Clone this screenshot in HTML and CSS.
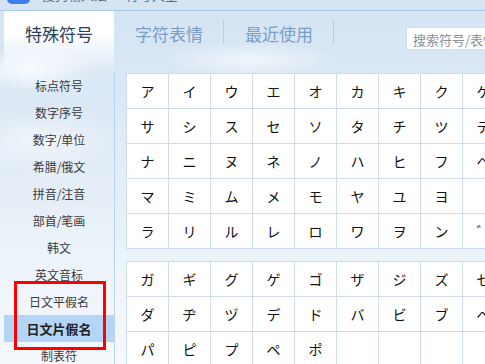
FILE: index.html
```html
<!DOCTYPE html>
<html lang="zh-CN">
<head>
  <meta charset="UTF-8">
  <title>符号大全</title>
  <link rel="stylesheet" href="styles.css">
</head>
<body>
  <div class="app">
    <div class="title-bar">
      <span class="logo"></span>
      <span class="title-text">搜狗输入法 · 符号大全</span>
    </div>

    <div class="tab-row">
      <div class="tab active">特殊符号</div>
      <div class="tab">字符表情</div>
      <div class="tab">最近使用</div>
      <div class="search-box">搜索符号/表情</div>
    </div>

    <div class="main">
      <ul class="side-nav">
        <li>标点符号</li>
        <li>数字序号</li>
        <li>数字/单位</li>
        <li>希腊/俄文</li>
        <li>拼音/注音</li>
        <li>部首/笔画</li>
        <li>韩文</li>
        <li>英文音标</li>
        <li>日文平假名</li>
        <li class="selected">日文片假名</li>
        <li>制表符</li>
        <div class="mark-box"></div>
      </ul>

      <div class="content">
        <div class="char-grid">
          <span>ア</span><span>イ</span><span>ウ</span><span>エ</span><span>オ</span><span>カ</span><span>キ</span><span>ク</span><span>ケ</span><span>コ</span>
          <span>サ</span><span>シ</span><span>ス</span><span>セ</span><span>ソ</span><span>タ</span><span>チ</span><span>ツ</span><span>テ</span><span>ト</span>
          <span>ナ</span><span>ニ</span><span>ヌ</span><span>ネ</span><span>ノ</span><span>ハ</span><span>ヒ</span><span>フ</span><span>ヘ</span><span>ホ</span>
          <span>マ</span><span>ミ</span><span>ム</span><span>メ</span><span>モ</span><span>ヤ</span><span>ユ</span><span>ヨ</span><span></span><span></span>
          <span>ラ</span><span>リ</span><span>ル</span><span>レ</span><span>ロ</span><span>ワ</span><span>ヲ</span><span>ン</span><span>゛</span><span>゜</span>
        </div>

        <div class="char-grid">
          <span>ガ</span><span>ギ</span><span>グ</span><span>ゲ</span><span>ゴ</span><span>ザ</span><span>ジ</span><span>ズ</span><span>ゼ</span><span>ゾ</span>
          <span>ダ</span><span>ヂ</span><span>ヅ</span><span>デ</span><span>ド</span><span>バ</span><span>ビ</span><span>ブ</span><span>ベ</span><span>ボ</span>
          <span>パ</span><span>ピ</span><span>プ</span><span>ペ</span><span>ポ</span><span></span><span></span><span></span><span></span><span></span>
        </div>
      </div>
    </div>
  </div>
</body>
</html>
```

FILE: styles.css
```css
* {
  box-sizing: border-box;
}

body {
  margin: 0;
  width: 485px;
  height: 364px;
  overflow: hidden;
  font-family: "Noto Sans CJK SC", "Noto Sans", sans-serif;
  background:
    radial-gradient(ellipse 70px 22px at 30px 70px, rgba(255, 255, 255, 0.85), rgba(255, 255, 255, 0)),
    radial-gradient(ellipse 90px 18px at 250px 60px, rgba(255, 255, 255, 0.6), rgba(255, 255, 255, 0)),
    radial-gradient(ellipse 80px 30px at 40px 140px, rgba(255, 255, 255, 0.5), rgba(255, 255, 255, 0)),
    linear-gradient(#d4e4f3 0, #dbe8f5 25%, #e6eff8 55%, #f0f5fb 80%, #f5f8fc 100%);
}

.app {
  width: 485px;
  height: 364px;
  display: flex;
  flex-direction: column;
}

.title-bar {
  height: 11px;
  flex-shrink: 0;
  display: flex;
  align-items: flex-end;
  gap: 12px;
  padding-left: 7px;
  overflow: hidden;
  border-bottom: 1px solid #aacbe8;
}

.logo {
  width: 23px;
  height: 16px;
  margin-bottom: 6px;
  border-radius: 5px;
  background-color: #3d7ff2;
}

.title-text {
  font-size: 13px;
  line-height: 13px;
  margin-bottom: 9px;
  color: #5e6b7a;
  white-space: nowrap;
}

.tab-row {
  height: 61px;
  flex-shrink: 0;
  display: flex;
  align-items: flex-start;
  padding-left: 4px;
  overflow: hidden;
}

.tab {
  width: 110px;
  height: 61px;
  flex-shrink: 0;
  display: flex;
  align-items: center;
  justify-content: center;
  padding-bottom: 16px;
  font-size: 17px;
  color: #7a9dca;
  position: relative;
}

.tab::after {
  content: "";
  position: absolute;
  right: 0;
  top: 9px;
  height: 24px;
  border-right: 1px solid #b4cfe8;
}

.tab.active {
  color: #2c3e5d;
  background: linear-gradient(#ffffff 0, #ffffff 35%, rgba(255, 255, 255, 0.4) 80%, rgba(255, 255, 255, 0) 100%);
}

.tab.active::after {
  display: none;
}

.search-box {
  flex-shrink: 0;
  margin-top: 16px;
  margin-left: 72px;
  width: 120px;
  height: 23px;
  padding: 2px 0 0 6px;
  background-color: white;
  border: 1px solid #d3dde8;
  font-size: 13px;
  color: #8a8f96;
  white-space: nowrap;
}

.main {
  flex: 1;
  display: flex;
  min-height: 0;
}

.side-nav {
  list-style: none;
  margin: 0;
  padding: 0 0 0 4px;
  width: 115px;
  flex-shrink: 0;
  border-right: 1px solid #b7d4ef;
  position: relative;
}

.side-nav li {
  height: 27px;
  line-height: 27px;
  text-align: center;
  font-size: 12px;
  color: #3a3a3a;
}

.side-nav li.selected {
  background-color: #b3d6f8;
  font-weight: bold;
  color: #222;
  font-size: 13px;
}

.mark-box {
  position: absolute;
  left: 14px;
  top: 209px;
  width: 92px;
  height: 69px;
  border: 3px solid #f00;
}

.content {
  flex: 1;
  padding: 1px 0 0 11px;
  overflow: hidden;
}

.char-grid {
  display: grid;
  grid-template-columns: repeat(10, 41px);
  grid-auto-rows: 34px;
  gap: 1px;
  width: 421px;
  background-color: #cedcf0;
  border: 1px solid #cedcf0;
  margin-bottom: 12px;
}

.char-grid span {
  background-color: white;
  display: flex;
  align-items: center;
  justify-content: center;
  font-family: "Noto Sans CJK JP", sans-serif;
  font-size: 14px;
  color: #111;
}
```
